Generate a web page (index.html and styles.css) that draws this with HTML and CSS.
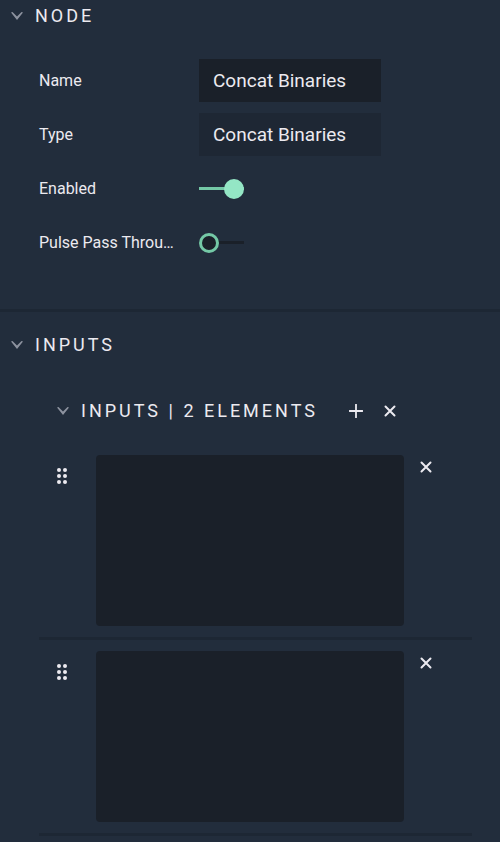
FILE: index.html
```html
<!DOCTYPE html>
<html lang="en">
<head>
<meta charset="utf-8">
<meta name="viewport" content="width=device-width, initial-scale=1">
<title>Node properties</title>
<link rel="stylesheet" href="styles.css">
</head>
<body>
<svg class="symbols" aria-hidden="true">
  <symbol id="chevron" viewBox="0 0 12 8"><path d="M0 .5 6 8l6-7.500L10.500 0 6 4.500 1.500 0Z" fill="currentColor"/></symbol>
  <symbol id="cross" viewBox="0 0 12 12"><path d="M1.500 1.500l9 9M10.500 1.500l-9 9" stroke="currentColor" stroke-width="2" stroke-linecap="round"/></symbol>
  <symbol id="plus" viewBox="0 0 14 14"><path d="M7 .5v13M.5 7h13" stroke="currentColor" stroke-width="1.800" stroke-linecap="round"/></symbol>
  <symbol id="grip" viewBox="0 0 10 16"><g fill="currentColor"><circle cx="2" cy="2" r="2"/><circle cx="8" cy="2" r="2"/><circle cx="2" cy="8" r="2"/><circle cx="8" cy="8" r="2"/><circle cx="2" cy="14" r="2"/><circle cx="8" cy="14" r="2"/></g></symbol>
</svg>
<main class="panel">
  <section class="section">
    <h2 class="heading"><button class="toggle" type="button" aria-expanded="true"><svg class="chevron"><use href="#chevron"/></svg>NODE</button></h2>
    <div class="fields">
      <div class="field"><label class="label" for="name">Name</label><input class="text" id="name" type="text" value="Concat Binaries"></div>
      <div class="field"><label class="label" for="type">Type</label><input class="text text-readonly" id="type" type="text" value="Concat Binaries" readonly></div>
      <div class="field"><label class="label" for="enabled">Enabled</label><input class="switch" id="enabled" type="checkbox" role="switch" checked></div>
      <div class="field"><label class="label" for="pulse">Pulse Pass Throu…</label><input class="switch" id="pulse" type="checkbox" role="switch"></div>
    </div>
  </section>
  <section class="section">
    <h2 class="heading"><button class="toggle" type="button" aria-expanded="true"><svg class="chevron"><use href="#chevron"/></svg>INPUTS</button></h2>
    <div class="list-header">
      <h3 class="heading"><button class="toggle" type="button" aria-expanded="true"><svg class="chevron"><use href="#chevron"/></svg>INPUTS | 2 ELEMENTS</button></h3>
      <div class="actions">
        <button class="icon-button" type="button" aria-label="Add element"><svg class="plus"><use href="#plus"/></svg></button>
        <button class="icon-button" type="button" aria-label="Remove all elements"><svg class="cross"><use href="#cross"/></svg></button>
      </div>
    </div>
    <ul class="items">
      <li class="item">
        <button class="icon-button drag" type="button" aria-label="Reorder element 1"><svg class="grip"><use href="#grip"/></svg></button>
        <textarea class="value" aria-label="Element 1"></textarea>
        <button class="icon-button" type="button" aria-label="Remove element 1"><svg class="cross"><use href="#cross"/></svg></button>
      </li>
      <li class="item">
        <button class="icon-button drag" type="button" aria-label="Reorder element 2"><svg class="grip"><use href="#grip"/></svg></button>
        <textarea class="value" aria-label="Element 2"></textarea>
        <button class="icon-button" type="button" aria-label="Remove element 2"><svg class="cross"><use href="#cross"/></svg></button>
      </li>
    </ul>
  </section>
</main>
</body>
</html>
```
FILE: styles.css
```css
* {
  box-sizing: border-box;
}

body {
  margin: 0;
  background: #222d3c;
  color: #eceaf0;
  font: 16px/24px Roboto, sans-serif;
}

button,
input,
textarea {
  font: inherit;
  color: inherit;
  border: 0;
  margin: 0;
  padding: 0;
}

button {
  background: none;
  cursor: pointer;
}

.symbols {
  display: none;
}

.section {
  padding-top: 21px;
}

.section:first-child {
  padding: 4px 0 45px;
  border-bottom: 3px solid #1d2734;
}

.heading {
  margin: 0;
  font-size: 18px;
  font-weight: 400;
}

.toggle {
  display: flex;
  align-items: center;
  gap: 12px;
  margin-left: 11px;
  letter-spacing: 3px;
  white-space: nowrap;
}

.chevron {
  width: 12px;
  height: 8px;
  color: #8d929f;
}

.fields {
  display: grid;
  gap: 11px;
  padding: 31px 39px 0;
}

.field {
  display: flex;
  align-items: center;
  gap: 24px;
  height: 43px;
}

.label {
  flex: none;
  width: 136px;
  white-space: nowrap;
}

.text {
  width: 182px;
  height: 43px;
  padding: 0 14px;
  background: #1a2029;
  font-size: 19px;
}

.text-readonly {
  background: #1e2734;
}

.switch {
  appearance: none;
  display: flex;
  align-items: center;
  width: 45px;
  height: 20px;
  background: linear-gradient(#1a2029, #1a2029) center / 100% 3px no-repeat;
  cursor: pointer;
}

.switch::before {
  content: "";
  box-sizing: border-box;
  width: 20px;
  height: 20px;
  border: 3px solid #74c8a6;
  border-radius: 50%;
  background: #1a2029;
}

.switch:checked {
  justify-content: flex-end;
  background-image: linear-gradient(#74c8a6, #74c8a6);
}

.switch:checked::before {
  border-color: #94e6c5;
  background: #94e6c5;
}

.list-header {
  display: flex;
  align-items: center;
  gap: 26px;
  margin-top: 42px;
  padding-left: 46px;
}

.actions {
  display: flex;
  gap: 10px;
}

.icon-button {
  display: grid;
  place-items: center;
  flex: none;
  width: 24px;
  height: 24px;
}

.plus {
  width: 14px;
  height: 14px;
}

.cross {
  width: 12px;
  height: 12px;
}

.grip {
  width: 10px;
  height: 16px;
}

.items {
  list-style: none;
  margin: 21px 28px 0 39px;
  padding: 0;
}

.item {
  display: flex;
  align-items: flex-start;
  padding: 11px 34px 11px 11px;
  border-bottom: 3px solid #1d2734;
}

.drag {
  margin: 9px 22px 0 0;
}

.value {
  flex: 1;
  min-width: 0;
  height: 171px;
  margin-right: 10px;
  padding: 12px;
  border-radius: 4px;
  background: #1a2029;
  resize: none;
}
```
